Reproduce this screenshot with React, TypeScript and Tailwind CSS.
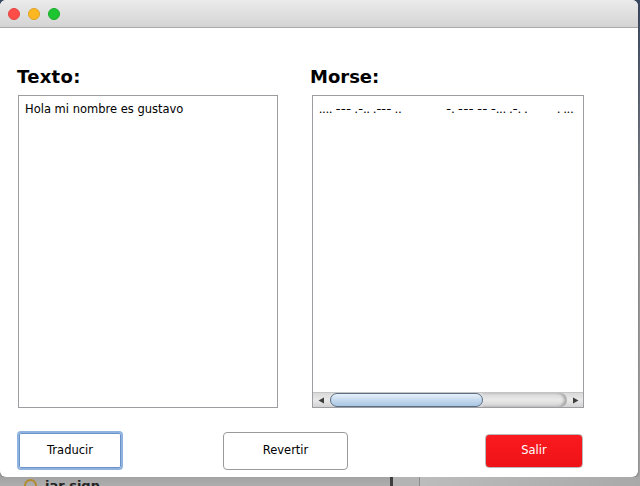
export default function App() {
  const font = { fontFamily: '"DejaVu Sans", "Liberation Sans", sans-serif' };

  return (
    <div
      className="w-[640px] h-[486px] overflow-hidden bg-gradient-to-b from-[#3b4a63] via-[#9a9a9a] to-[#a8a8a8] flex flex-col"
      style={font}
    >
      {/* Window */}
      <div className="w-[638px] h-[477px] shrink-0 bg-white rounded-[6px] overflow-hidden flex flex-col shadow-[0_1px_3px_rgba(0,0,0,0.35)]">
        {/* Title bar */}
        <div className="h-[28px] shrink-0 bg-gradient-to-b from-[#ebebeb] to-[#d4d4d4] border-b border-[#a9a9a9] flex items-center gap-[8px] pl-[8px]">
          <span className="w-[12px] h-[12px] rounded-full bg-[#fe4d48] border border-[#e2463f]" />
          <span className="w-[12px] h-[12px] rounded-full bg-[#fdb723] border border-[#dea123]" />
          <span className="w-[12px] h-[12px] rounded-full bg-[#1dc630] border border-[#1aaa2a]" />
        </div>

        {/* Content */}
        <div className="flex-1 flex flex-col pl-[17px] pt-[38px]">
          <div className="flex gap-[33px]">
            {/* Texto column */}
            <div className="w-[261px] flex flex-col">
              <div className="text-[18px] leading-[22px] font-bold text-black mb-[7px] tracking-[0.3px]">Texto:</div>
              <div className="ml-[1px] h-[313px] border border-[#9c9ca1] bg-white pt-[5px] px-[6px] text-[11.5px] leading-[16px] text-black">
                Hola mi nombre es gustavo
              </div>
            </div>

            {/* Morse column */}
            <div className="w-[273px] flex flex-col">
              <div className="text-[18px] leading-[22px] font-bold text-black mb-[7px] -ml-[1px]">Morse:</div>
              <div className="ml-[1px] h-[313px] border border-[#9c9ca1] bg-white flex flex-col overflow-hidden">
                <div
                  className="flex-1 pt-[5px] pl-[6px] text-[11.5px] leading-[16px] text-black whitespace-pre overflow-hidden flex"
                  style={{ fontFamily: 'Inter, "DejaVu Sans", sans-serif' }}
                >
                  <span className="w-[62px] shrink-0">.... --- .-.. .-</span>
                  <span className="w-[65px] shrink-0">-- ..</span>
                  <span className="w-[111px] shrink-0">-. --- -- -... .-. .</span>
                  <span className="shrink-0">. ...   --. ..- ... - .- ...- ---</span>
                </div>
                {/* Horizontal scrollbar */}
                <div className="h-[15px] shrink-0 flex items-stretch bg-gradient-to-b from-[#d9d9d9] via-[#e9e9e9] to-[#d2d2d2] border-t border-[#c4c4c4]">
                  <div className="w-[16px] flex items-center justify-center">
                    <svg width="7" height="7" viewBox="0 0 7 7">
                      <path d="M6 0.5 L0.5 3.5 L6 6.5 Z" fill="#3d3d3d" />
                    </svg>
                  </div>
                  <div className="flex-1 flex items-stretch">
                    <div className="w-[153px] ml-[1px] rounded-full bg-gradient-to-b from-[#e8f1fa] via-[#c5daee] to-[#a9c6e2] border border-[#5b6f86]" />
                    <div className="flex-1 rounded-r-full shadow-[inset_-3px_0_3px_rgba(0,0,0,0.25)]" />
                  </div>
                  <div className="w-[16px] flex items-center justify-center">
                    <svg width="7" height="7" viewBox="0 0 7 7">
                      <path d="M1 0.5 L6.5 3.5 L1 6.5 Z" fill="#3d3d3d" />
                    </svg>
                  </div>
                </div>
              </div>
            </div>
          </div>

          {/* Buttons */}
          <div className="flex items-center mt-[23px] h-[39px]">
            <button className="w-[106px] h-[39px] rounded-[4px] border-2 border-[#8fb3de] bg-white text-[11.5px] text-black shadow-[inset_0_0_0_1px_#6a93c9]">
              Traducir
            </button>
            <button className="ml-[100px] w-[125px] h-[38px] rounded-[4px] border border-[#9a9a9a] bg-white text-[11.5px] text-black">
              Revertir
            </button>
            <button className="ml-[137px] w-[98px] h-[34px] rounded-[4px] border border-[#b9b9b9] bg-gradient-to-b from-[#fa1a1f] to-[#ee1216] text-[11.5px] text-white">
              Salir
            </button>
          </div>
        </div>
      </div>

      {/* Desktop peeking below the window */}
      <div className="flex-1 flex bg-gradient-to-b from-[#a3a3a3] to-[#b5b5b5]">
        <div className="w-[390px] flex items-start pl-[24px] pt-[2px] gap-[8px]">
          <span className="w-[13px] h-[13px] rounded-full border-2 border-[#b48a2c]" />
          <span className="text-[13px] leading-[14px] font-bold text-[#222]">jar sign</span>
        </div>
        <div className="w-[3px] bg-[#3e3e3e]" />
        <div className="w-[27px] bg-[#b4b4b4] border-r border-[#8c8c8c]" />
        <div className="flex-1 bg-gradient-to-r from-[#bcbcbc] to-[#a9a9a9]" />
      </div>
    </div>
  );
}
